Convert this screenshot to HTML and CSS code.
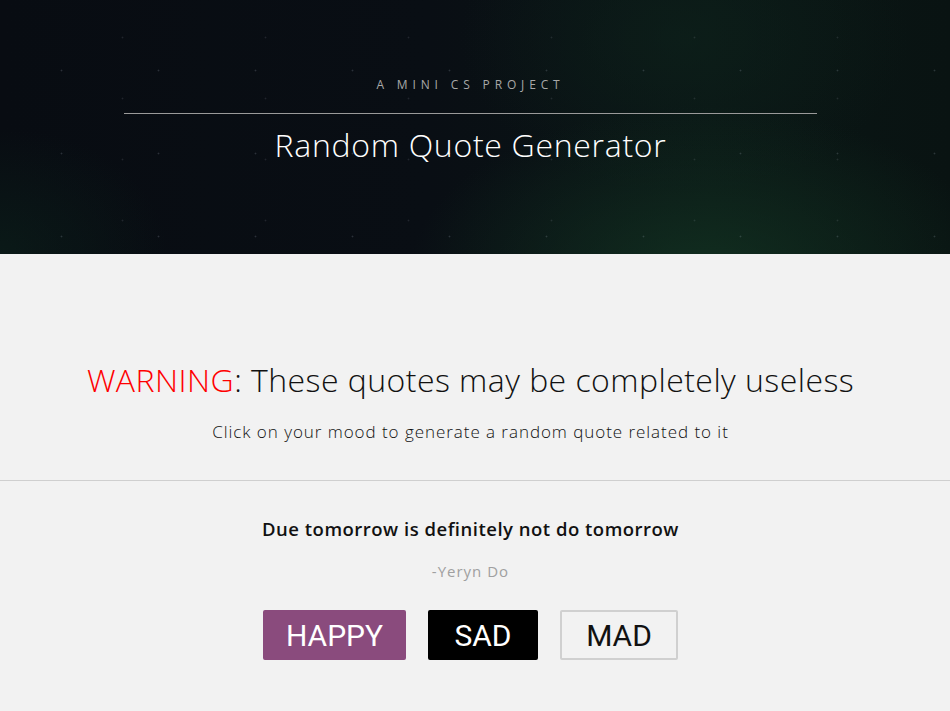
FILE: index.html
```html
<!DOCTYPE html>
<html lang="en">
<head>
<meta charset="utf-8">
<title>Random Quote Generator</title>
<link rel="stylesheet" href="styles.css">
</head>
<body>
<header class="hero">
  <p class="hero-kicker">A MINI CS PROJECT</p>
  <hr class="hero-rule">
  <h1 class="hero-title">Random Quote Generator</h1>
</header>
<main class="content">
  <h2 class="warning"><span class="warning-label">WARNING</span>: These quotes may be completely useless</h2>
  <p class="lead">Click on your mood to generate a random quote related to it</p>
  <hr class="divider">
  <p class="quote">Due tomorrow is definitely not do tomorrow</p>
  <p class="author">-Yeryn Do</p>
  <div class="moods">
    <button class="mood mood-happy">HAPPY</button>
    <button class="mood mood-sad">SAD</button>
    <button class="mood mood-mad">MAD</button>
  </div>
</main>
</body>
</html>
```
FILE: styles.css
```css
* { box-sizing: border-box; }
html, body { margin: 0; padding: 0; }
body {
  background: #f2f2f2;
  font-family: "Open Sans", "Liberation Sans", sans-serif;
  color: #111;
  height: 711px;
  overflow: hidden;
}
.hero {
  height: 254px;
  padding: 75px 9px 0 0;
  text-align: center;
  background:
    radial-gradient(circle at 50% 50%, rgba(200,210,230,0.18) 0.6px, rgba(0,0,0,0) 1.2px) 13px 29px / 97px 83px,
    radial-gradient(circle at 50% 50%, rgba(200,210,230,0.12) 0.6px, rgba(0,0,0,0) 1.2px) 51px 7px / 143px 61px,
    radial-gradient(ellipse 420px 240px at 74% 108%, rgba(20, 56, 36, 0.7), rgba(20, 56, 36, 0) 70%),
    radial-gradient(ellipse 320px 220px at 72% 15%, rgba(14, 36, 28, 0.55), rgba(14, 36, 28, 0) 70%),
    radial-gradient(ellipse 240px 180px at 0% 100%, rgba(12, 36, 28, 0.55), rgba(12, 36, 28, 0) 70%),
    linear-gradient(90deg, #080c12 0%, #090e14 45%, #0a1615 75%, #091312 100%);
}
.hero-kicker {
  margin: 0;
  font-size: 12px;
  line-height: 20px;
  letter-spacing: 4.85px;
  color: #a8a8a8;
  font-weight: 400;
}
.hero-rule {
  width: 693px;
  margin: 18px auto 0;
  border: 0;
  height: 1px;
  background: #9a9a9a;
}
.hero-title {
  margin: 11px 0 0;
  font-size: 32px;
  line-height: 40px;
  letter-spacing: 0.7px;
  font-weight: 300;
  color: #fff;
}
.content {
  padding: 104px 9px 0 0;
  text-align: center;
}
.warning {
  margin: 0;
  font-size: 32px;
  line-height: 44px;
  letter-spacing: 0.45px;
  font-weight: 300;
  color: #111;
}
.warning-label { color: #ff0000; }
.lead {
  margin: 18px 0 0;
  font-size: 17px;
  line-height: 24px;
  letter-spacing: 0.95px;
  font-weight: 300;
  color: #111;
}
.divider {
  margin: 36px -9px 0 0;
  border: 0;
  height: 1px;
  background: #cfcfcf;
}
.quote {
  margin: 34px 0 0;
  font-size: 18.5px;
  line-height: 28px;
  letter-spacing: 0.5px;
  font-weight: 600;
  color: #111;
}
.author {
  margin: 17px 0 0;
  font-size: 15px;
  line-height: 22px;
  letter-spacing: 1px;
  color: #a0a0a0;
  font-weight: 400;
}
.moods {
  margin-top: 28px;
  display: flex;
  justify-content: center;
  gap: 22px;
}
.mood {
  height: 50px;
  border-radius: 2px;
  font-family: Roboto, "Liberation Sans", sans-serif;
  font-size: 30px;
  font-weight: 400;
  padding: 0;
  border: 2px solid transparent;
  cursor: pointer;
}
.mood-happy { width: 143px; background: #8a4b7d; color: #fff; border-color: #8a4b7d; }
.mood-sad { width: 110px; background: #000; color: #fff; border-color: #000; }
.mood-mad { width: 118px; background: transparent; color: #111; border-color: #d0d0d0; }
```
